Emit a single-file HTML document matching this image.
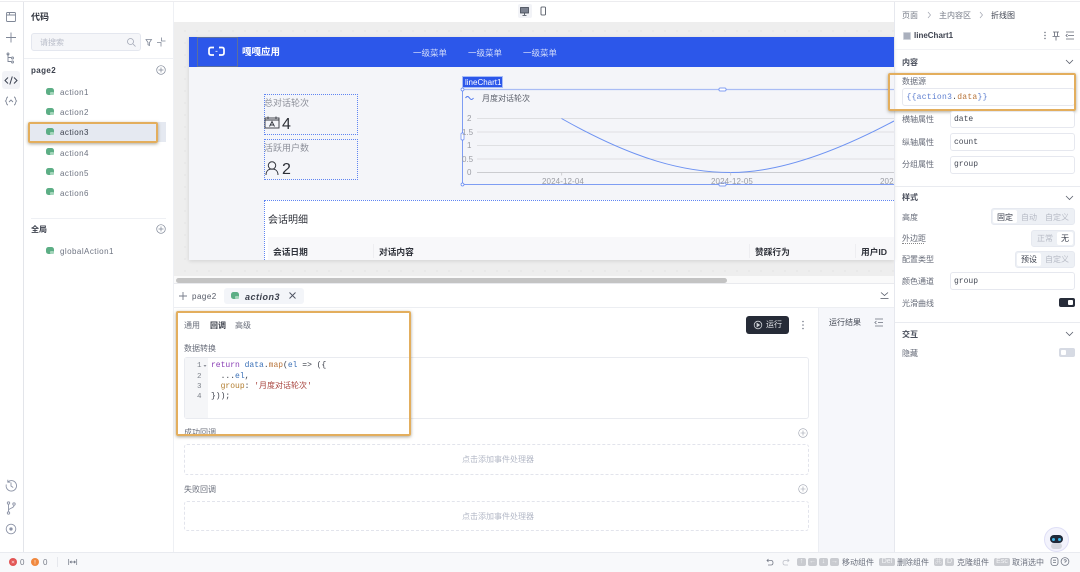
<!DOCTYPE html>
<html lang="zh"><head><meta charset="utf-8"><title>代码</title>
<style>
*{box-sizing:border-box}
html{background:#fff}
html,body{margin:0;padding:0;width:1080px;height:572px;overflow:hidden}
body{position:relative;background:#fff;font-family:"Liberation Sans","Noto Sans CJK SC",sans-serif;font-size:8px;color:#4b5160;filter:blur(.3px)}
.a,.t{position:absolute}
.t{white-space:pre;line-height:12px;height:12px;margin-top:1px}
.m{font-family:"Liberation Mono","Noto Sans CJK SC",monospace}
svg{position:absolute;overflow:visible}
.o{position:absolute;border:2px solid #e3ae5d;border-radius:2px;box-shadow:0 1px 3px rgba(90,80,50,.5)}
.inp{position:absolute;border:1px solid #e6e8ef;border-radius:3px;background:#fff}
.seg{position:absolute;background:#edf0f5;border-radius:3px;border:1px solid #e6e9f0}
.sel{position:absolute;background:#fff;border-radius:2px}
.key{position:absolute;background:#c9cbd0;border-radius:2px;height:8px;top:558px;color:#f4f5f7;font-size:7px;line-height:8px;text-align:center}
.dash{position:absolute;border:1px dashed #e2e4ec;border-radius:3px}
.sl{position:absolute;border:1px dotted #5f85f2}
</style></head><body>

<!-- top line -->
<div class="a" style="left:0;top:1px;width:1080px;height:1px;background:#ececef"></div>

<!-- left rail -->
<div class="a" style="left:23px;top:2px;width:1px;height:550px;background:#e3e5ea"></div>
<div class="a" style="left:2px;top:71px;width:18px;height:18px;background:#f2f3f7;border-radius:3px"></div>
<svg style="left:0;top:0" width="24" height="120" fill="none" stroke="#7f8797" stroke-width=".9">
<rect x="6.500" y="12.500" width="9" height="9" rx="1"/><path d="M6.500 15h9M9.500 12.500v2.500"/>
<path d="M6 37.500h10M11 32.500v10" />
<path d="M8 54v7.500h3M8 57.500h3"/><circle cx="8" cy="54" r="1"/><circle cx="12.500" cy="58" r="1"/><circle cx="12.500" cy="62" r="1"/>
<path d="M8 77.500l-3 3 3 3M14 77.500l3 3-3 3M12.300 76.500l-2.500 8" stroke="#3b4150" stroke-width="1"/>
<path d="M8 97c-2 0-1 3-2.500 4 1.500 1 .5 4 2.500 4M14 97c2 0 1 3 2.500 4-1.500 1-.5 4-2.500 4M9 102l2-2 2 2"/>
</svg>
<svg style="left:0;top:470px" width="24" height="70" fill="none" stroke="#8c93a6" stroke-width=".9">
<path d="M6.300 12.500a5.200 5.200 0 1 0 1.500-2.500M7.800 7.800v2.400h2.400" transform="translate(0 2)"/><path d="M11 12.500v3.500l2.200 1.500"/>
<circle cx="8.500" cy="33" r="1.200"/><circle cx="8.500" cy="43" r="1.200"/><circle cx="14" cy="34" r="1.200"/><path d="M8.500 34.500v7M14 35.500c0 3-5.500 2.500-5.500 5"/>
<circle cx="11" cy="59" r="4.800"/><circle cx="11" cy="59" r="1.200" fill="#8c93a6"/>
</svg>

<!-- code panel -->
<div class="t" style="left:31px;top:10px;font-size:9px;color:#30343e;font-weight:600">代码</div>
<div class="inp" style="left:31px;top:33px;width:110px;height:18px;background:#f5f6f9;border-color:#e4e7ef"></div>
<div class="t" style="left:40px;top:36px;color:#b9bdc9">请搜索</div>
<svg style="left:125px;top:36px" width="50" height="14" fill="none" stroke="#a2a7b5" stroke-width=".8">
<circle cx="5.500" cy="5.500" r="3"/><path d="M8 8l2.500 2.500"/>
<path stroke="#7f8797" d="M21 3.500h5.500l-2 3v3l-1.500-.8v-2.200z"/>
<path stroke="#7f8797" d="M32 6.500h4V10.500M36.500 1.500v3.500h4"/>
</svg>
<div class="a" style="left:24px;top:58px;width:149px;height:1px;background:#eef0f4"></div>
<div class="t" style="left:31px;top:64px;color:#3c414d;letter-spacing:.4px;font-weight:600">page2</div>
<svg style="left:156px;top:65px" width="10" height="10" fill="none" stroke="#7f8797" stroke-width=".7"><circle cx="5" cy="5" r="4.300"/><path d="M2.500 5h5M5 2.500v5"/></svg>

<div class="a" style="left:30px;top:122px;width:136px;height:20px;background:#e5e9f1"></div>

<svg style="left:45px;top:86px" width="12" height="170" fill="#5cae85">
<rect x="1" y="2" width="8" height="7" rx="2.500"/><rect x="5" y="6" width="4" height="3" rx="1" fill="#a4d5bb"/>
<rect x="1" y="22" width="8" height="7" rx="2.500"/><rect x="5" y="26" width="4" height="3" rx="1" fill="#a4d5bb"/>
<rect x="1" y="42" width="8" height="7" rx="2.500"/><rect x="5" y="46" width="4" height="3" rx="1" fill="#a4d5bb"/>
<rect x="1" y="62" width="8" height="7" rx="2.500"/><rect x="5" y="66" width="4" height="3" rx="1" fill="#a4d5bb"/>
<rect x="1" y="82" width="8" height="7" rx="2.500"/><rect x="5" y="86" width="4" height="3" rx="1" fill="#a4d5bb"/>
<rect x="1" y="102" width="8" height="7" rx="2.500"/><rect x="5" y="106" width="4" height="3" rx="1" fill="#a4d5bb"/>
<rect x="1" y="161" width="8" height="7" rx="2.500"/><rect x="5" y="165" width="4" height="3" rx="1" fill="#a4d5bb"/>
</svg>
<div class="t" style="left:60px;top:86px;color:#6e7482;letter-spacing:.45px">action1</div>
<div class="t" style="left:60px;top:106px;color:#6e7482;letter-spacing:.45px">action2</div>
<div class="t" style="left:60px;top:126px;color:#3c414d;letter-spacing:.45px">action3</div>
<div class="t" style="left:60px;top:147px;color:#6e7482;letter-spacing:.45px">action4</div>
<div class="t" style="left:60px;top:167px;color:#6e7482;letter-spacing:.45px">action5</div>
<div class="t" style="left:60px;top:187px;color:#6e7482;letter-spacing:.45px">action6</div>
<div class="o" style="left:28px;top:122px;width:130px;height:21px"></div>
<div class="a" style="left:31px;top:218px;width:135px;height:1px;background:#eef0f4"></div>
<div class="t" style="left:31px;top:223px;color:#3c414d;font-weight:600">全局</div>
<svg style="left:156px;top:224px" width="10" height="10" fill="none" stroke="#7f8797" stroke-width=".7"><circle cx="5" cy="5" r="4.300"/><path d="M2.500 5h5M5 2.500v5"/></svg>
<div class="t" style="left:60px;top:245px;color:#6e7482;letter-spacing:.45px">globalAction1</div>
<div class="a" style="left:173px;top:2px;width:1px;height:550px;background:#eef0f4"></div>

<!-- canvas -->
<div class="a" style="left:174px;top:22px;width:720px;height:254px;background:#eeeeee radial-gradient(circle,#dcdcdc .6px,transparent .8px) 5px 3px/12px 12px"></div>
<div class="a" style="left:518px;top:4px;width:14px;height:14px;background:#f2f3f7;border-radius:2px"></div>
<svg style="left:518px;top:4px" width="34" height="14" fill="none" stroke="#3f4552" stroke-width=".8">
<rect x="2.500" y="3.500" width="8" height="5.500" fill="#7c8290"/><path d="M6.500 9v2M4.500 11.500h4"/>
<rect x="23" y="3" width="4.500" height="8" rx=".8"/>
</svg>
<div class="a" style="left:189px;top:37px;width:705px;height:223px;background:#f4f5f9;box-shadow:0 1px 4px rgba(0,0,0,.12)"></div>
<div class="a" style="left:189px;top:37px;width:705px;height:30px;background:#2c57ea"></div>
<div class="a" style="left:197px;top:37px;width:41px;height:30px;border:1px solid #5a6f9f"></div>
<svg style="left:208px;top:46px" width="18" height="12" fill="none" stroke="#fff" stroke-width="1.700"><path d="M6 1.500H3Q1 1.500 1 3.500v3.500q0 2 2 2h3M11 1.500h3q2 0 2 2v3.500q0 2-2 2h-3"/><path d="M7.500 5.300h2" stroke-width=".8"/></svg>
<div class="t" style="left:242px;top:46px;font-size:9.500px;color:#fff;font-weight:600">嘎嘎应用</div>
<div class="t" style="left:413px;top:46px;font-size:8.500px;color:#d4ddfa">一级菜单</div>
<div class="t" style="left:468px;top:46px;font-size:8.500px;color:#d4ddfa">一级菜单</div>
<div class="t" style="left:523px;top:46px;font-size:8.500px;color:#d4ddfa">一级菜单</div>

<!-- stat cards -->
<div class="sl" style="left:264px;top:94px;width:94px;height:41px"></div>
<div class="t" style="left:264px;top:96px;font-size:9px;color:#8d909a">总对话轮次</div>
<svg style="left:264px;top:116px" width="16" height="14" fill="none" stroke="#33363e" stroke-width=".9"><rect x="1" y="2" width="14" height="10"/><path d="M4 .5v2.500M12 .5v2.500M1 4h14M5.500 10.500l2.500-5 2.500 5M6.500 9h3"/></svg>
<div class="t" style="left:282px;top:116px;font-size:16px;line-height:15px;height:15px;color:#2c2f36">4</div>
<div class="sl" style="left:264px;top:139px;width:94px;height:41px"></div>
<div class="t" style="left:264px;top:141px;font-size:9px;color:#8d909a">活跃用户数</div>
<svg style="left:264px;top:160px" width="16" height="16" fill="none" stroke="#33363e" stroke-width="1"><circle cx="8" cy="5.500" r="3.700"/><path d="M2 15c0-4 2.500-6 6-6s6 2 6 6"/></svg>
<div class="t" style="left:282px;top:161px;font-size:16px;line-height:15px;height:15px;color:#2c2f36">2</div>

<!-- chart -->
<div class="a" style="left:462px;top:76px;width:41px;height:12px;background:#2c57ea;border:1px solid #a8bdf6"></div>
<div class="t" style="left:465px;top:76px;color:#fff">lineChart1</div>
<svg style="left:460px;top:85px" width="434" height="105" fill="none">
<path d="M17 33.500H434M17 47H434M17 60.500H434M17 74H434" stroke="#dfe0e3" stroke-width="1"/>
<path d="M17 87.500H434" stroke="#cbccd0" stroke-width="1"/>
<path d="M101.500 33.500C175 75 225 87.500 271 87.500 325 87.500 385 62 434 36" stroke="#6d92f2" stroke-width="1"/>
<path d="M101.700 87.500v3M270.700 87.500v3" stroke="#c5c6c9" stroke-width=".8"/>
<path d="M2.500 4.500H434" stroke="#a9bcf5" stroke-width="1.200"/>
<path d="M2.500 4.500V99.500H434" stroke="#7e9df3" stroke-width="1"/>
<path d="M5.500 13q2-3 4 0t4 0" stroke="#4f77ee" stroke-width="1"/>
<circle cx="2.500" cy="4.500" r="1.500" fill="#fff" stroke="#5f84f0" stroke-width=".7"/>
<circle cx="2.500" cy="99.500" r="1.500" fill="#fff" stroke="#5f84f0" stroke-width=".7"/>
<rect x="1" y="48" width="3" height="7" rx="1" fill="#fff" stroke="#5f84f0" stroke-width=".7"/>
<rect x="259" y="3" width="7" height="3" rx="1" fill="#fff" stroke="#5f84f0" stroke-width=".7"/>
<rect x="259" y="98" width="7" height="3" rx="1" fill="#fff" stroke="#5f84f0" stroke-width=".7"/>
</svg>
<div class="t" style="left:482px;top:92px;color:#5a5e69">月度对话轮次</div>
<div class="t" style="left:467px;top:112px;color:#9a9ca3">2</div>
<div class="t" style="left:462px;top:126px;color:#9a9ca3">1.5</div>
<div class="t" style="left:467px;top:139px;color:#9a9ca3">1</div>
<div class="t" style="left:462px;top:153px;color:#9a9ca3">0.5</div>
<div class="t" style="left:467px;top:166px;color:#9a9ca3">0</div>
<div class="t" style="left:542px;top:175px;color:#9a9ca3;letter-spacing:.1px">2024-12-04</div>
<div class="t" style="left:711px;top:175px;color:#9a9ca3;letter-spacing:.1px">2024-12-05</div>
<div class="t" style="left:880px;top:175px;width:14px;overflow:hidden;color:#9a9ca3;letter-spacing:.1px">2024</div>

<!-- table -->
<div class="a" style="left:264px;top:200px;width:630px;height:60px;background:#fff;border-top:1px dotted #5f85f2;border-left:1px dotted #5f85f2"></div>
<div class="t" style="left:268px;top:214px;font-size:10px;color:#30333b">会话明细</div>
<div class="a" style="left:268px;top:237px;width:626px;height:23px;background:#f8f8fa"></div>
<div class="a" style="left:373px;top:244px;width:1px;height:14px;background:#eeeef1"></div>
<div class="a" style="left:749px;top:244px;width:1px;height:14px;background:#eeeef1"></div>
<div class="a" style="left:855px;top:244px;width:1px;height:14px;background:#eeeef1"></div>
<div class="t" style="left:273px;top:245px;font-size:8.700px;color:#2f323a;font-weight:600">会话日期</div>
<div class="t" style="left:379px;top:245px;font-size:8.700px;color:#2f323a;font-weight:600">对话内容</div>
<div class="t" style="left:755px;top:245px;font-size:8.700px;color:#2f323a;font-weight:600">赞踩行为</div>
<div class="t" style="left:861px;top:245px;font-size:8.700px;color:#2f323a;font-weight:600">用户ID</div>

<!-- scrollbar -->
<div class="a" style="left:174px;top:276px;width:720px;height:8px;background:#fafafa;border-bottom:1px solid #e9eaee"></div>
<div class="a" style="left:176px;top:278px;width:551px;height:5px;background:#c3c3c3;border-radius:3px"></div>

<!-- bottom tabs -->
<svg style="left:178px;top:291px" width="10" height="10" stroke="#777d8b" stroke-width=".9"><path d="M1 5h8M5 1v8"/></svg>
<div class="t" style="left:192px;top:290px;color:#555a67;letter-spacing:.5px">page2</div>
<div class="a" style="left:224px;top:288px;width:80px;height:16px;background:#f3f5f9;border-radius:3px"></div>
<svg style="left:231px;top:291px" width="10" height="10"><rect x="0" y="1" width="8" height="7" rx="2.500" fill="#5cae85"/><rect x="4" y="5" width="4" height="3" rx="1" fill="#a4d5bb"/></svg>
<div class="t" style="left:245px;top:290px;font-size:9px;color:#3c414d;font-weight:700;font-style:italic;letter-spacing:.5px">action3</div>
<svg style="left:288px;top:291px" width="10" height="10" stroke="#4c5160" stroke-width=".9"><path d="M1.500 1.500l6 6M7.500 1.500l-6 6"/></svg>
<div class="a" style="left:174px;top:307px;width:720px;height:1px;background:#eceef2"></div>
<div class="a" style="left:874px;top:284px;width:20px;height:23px;background:#fff"></div>
<svg style="left:880px;top:291px" width="10" height="10" fill="none" stroke="#4f5462" stroke-width=".8"><path d="M1 1.500l3.500 3 3.500-3M.5 7.500h8"/></svg>

<!-- editor pane -->
<div class="t" style="left:184px;top:319px;color:#686d7a">通用</div>
<div class="t" style="left:210px;top:319px;color:#3a3e49;font-weight:600">回调</div>
<div class="t" style="left:235px;top:319px;color:#686d7a">高级</div>
<div class="a" style="left:746px;top:316px;width:43px;height:18px;background:#262b37;border-radius:3px"></div>
<svg style="left:753px;top:320px" width="10" height="10" fill="none" stroke="#cfd2d8" stroke-width=".8"><circle cx="5" cy="5" r="3.800"/><path d="M4 3.300l2.500 1.700L4 6.700z" fill="#cfd2d8"/></svg>
<div class="t" style="left:766px;top:318px;color:#dfe1e6">运行</div>
<svg style="left:801px;top:320px" width="4" height="10" fill="#777c89"><circle cx="2" cy="1.500" r=".8"/><circle cx="2" cy="5" r=".8"/><circle cx="2" cy="8.500" r=".8"/></svg>
<div class="t" style="left:184px;top:342px;color:#686d7a">数据转换</div>
<div class="a" style="left:184px;top:357px;width:625px;height:62px;background:#fff;border:1px solid #e9ebf0;border-radius:3px"></div>
<div class="a" style="left:185px;top:358px;width:23px;height:60px;background:#f5f6f8"></div>
<div class="t m" style="left:197px;top:359px;font-size:7.500px;color:#7b8089">1</div>
<div class="t m" style="left:197px;top:370px;font-size:7.500px;color:#7b8089">2</div>
<div class="t m" style="left:197px;top:380px;font-size:7.500px;color:#7b8089">3</div>
<div class="t m" style="left:197px;top:390px;font-size:7.500px;color:#7b8089">4</div>
<svg style="left:203px;top:364px" width="5" height="5" fill="#8b8f98"><path d="M.5 1h3L2 3z"/></svg>
<div class="t m" style="left:211px;top:359px;font-size:8px;color:#3a3e49"><span style="color:#8a3fb5">return</span> <span style="color:#3d72b8">data</span>.<span style="color:#b9763c">map</span>(<span style="color:#3d72b8">el</span> =&gt; ({</div>
<div class="t m" style="left:211px;top:370px;font-size:8px;color:#3a3e49">  ...<span style="color:#3d72b8">el</span>,</div>
<div class="t m" style="left:211px;top:380px;font-size:8px;color:#3a3e49">  <span style="color:#b27c2e">group</span>: <span style="color:#a8443e">'月度对话轮次'</span></div>
<div class="t m" style="left:211px;top:390px;font-size:8px;color:#3a3e49">}));</div>

<div class="t" style="left:184px;top:426px;color:#686d7a">成功回调</div>
<svg style="left:798px;top:428px" width="10" height="10" fill="none" stroke="#9a9fac" stroke-width=".6"><circle cx="5" cy="5" r="4.300"/><path d="M2.500 5h5M5 2.500v5"/></svg>
<div class="dash" style="left:184px;top:444px;width:625px;height:31px"></div>
<div class="t" style="left:462px;top:453px;color:#b4b9c7">点击添加事件处理器</div>
<div class="t" style="left:184px;top:483px;color:#686d7a">失败回调</div>
<svg style="left:798px;top:484px" width="10" height="10" fill="none" stroke="#9a9fac" stroke-width=".6"><circle cx="5" cy="5" r="4.300"/><path d="M2.500 5h5M5 2.500v5"/></svg>
<div class="dash" style="left:184px;top:501px;width:625px;height:30px"></div>
<div class="t" style="left:462px;top:510px;color:#b4b9c7">点击添加事件处理器</div>
<div class="o" style="left:176px;top:311px;width:235px;height:125px"></div>

<!-- run results -->
<div class="a" style="left:818px;top:308px;width:76px;height:244px;background:#f6f7fb;border-left:1px solid #eceef3"></div>
<div class="t" style="left:829px;top:316px;color:#444955">运行结果</div>
<svg style="left:874px;top:318px" width="10" height="9" fill="none" stroke="#6a6f7c" stroke-width=".7"><path d="M1 1h8M4 4.500h5M1 8h8M2.500 3L.8 4.500l1.700 1.500"/></svg>

<!-- right panel -->
<div class="a" style="left:894px;top:2px;width:1px;height:550px;background:#e6e8ee"></div>
<div class="t" style="left:902px;top:9px;color:#777c88">页面</div>
<svg style="left:926px;top:11px" width="70" height="8" fill="none" stroke="#a3a7b2" stroke-width=".7"><path d="M2 1l2.500 3L2 7M54 1l2.500 3L54 7"/></svg>
<div class="t" style="left:939px;top:9px;color:#777c88">主内容区</div>
<div class="t" style="left:991px;top:9px;color:#3e4350">折线图</div>
<div class="a" style="left:903px;top:32px;width:8px;height:8px;background:#aab0bd;border-radius:1px;border:1.500px solid #cfd3db"></div>
<div class="t" style="left:914px;top:29px;color:#3e4350;font-weight:600">lineChart1</div>
<svg style="left:1040px;top:30px" width="36" height="12" fill="none" stroke="#626774" stroke-width=".8">
<g fill="#626774" stroke="none"><circle cx="5" cy="2.500" r=".7"/><circle cx="5" cy="5.500" r=".7"/><circle cx="5" cy="8.500" r=".7"/></g>
<path d="M13 2h6M14.500 2v4M17.500 2v4M12.500 6.500h7M16 6.500v4"/>
<path d="M26 2h8M28 5.500h6M26 9h8M27.500 4l-1.500 1.500 1.500 1.500"/>
</svg>
<div class="a" style="left:895px;top:49px;width:185px;height:1px;background:#f1f2f5"></div>
<div class="t" style="left:902px;top:56px;color:#4a4f5c;font-weight:600">内容</div>
<svg style="left:1065px;top:59px" width="10" height="6" fill="none" stroke="#5c616e" stroke-width=".8"><path d="M1 1l3.500 3.500L8 1"/></svg>
<div class="t" style="left:902px;top:75px;color:#666b78">数据源</div>
<div class="inp" style="left:902px;top:88px;width:173px;height:18px"></div>
<div class="t m" style="left:906.500px;top:91px;font-size:8px;letter-spacing:.27px;color:#5e7fd0">{{action3<span style="color:#444">.</span><span style="color:#b9763c">data</span>}}</div>
<div class="o" style="left:888px;top:73px;width:188px;height:38px"></div>

<div class="t" style="left:902px;top:113px;color:#666b78">横轴属性</div>
<div class="inp" style="left:950px;top:111px;width:125px;height:17px"></div>
<div class="t m" style="left:954px;top:113px;font-size:8px;color:#444955">date</div>
<div class="t" style="left:902px;top:136px;color:#666b78">纵轴属性</div>
<div class="inp" style="left:950px;top:133px;width:125px;height:18px"></div>
<div class="t m" style="left:954px;top:136px;font-size:8px;color:#444955">count</div>
<div class="t" style="left:902px;top:158px;color:#666b78">分组属性</div>
<div class="inp" style="left:950px;top:156px;width:125px;height:18px"></div>
<div class="t m" style="left:954px;top:158px;font-size:8px;color:#444955">group</div>

<div class="a" style="left:895px;top:186px;width:185px;height:1px;background:#e9ebf0"></div>
<div class="t" style="left:902px;top:191px;color:#4a4f5c;font-weight:600">样式</div>
<svg style="left:1065px;top:195px" width="10" height="6" fill="none" stroke="#5c616e" stroke-width=".8"><path d="M1 1l3.500 3.500L8 1"/></svg>
<div class="t" style="left:902px;top:211px;color:#666b78">高度</div>
<div class="seg" style="left:991px;top:208px;width:84px;height:17px"></div>
<div class="sel" style="left:993px;top:210px;width:24px;height:13px"></div>
<div class="t" style="left:997px;top:211px;color:#3e4350">固定</div>
<div class="t" style="left:1021px;top:211px;color:#b6bac5">自动</div>
<div class="t" style="left:1045px;top:211px;color:#b6bac5">自定义</div>
<div class="t" style="left:902px;top:232px;color:#666b78">外边距</div>
<div class="a" style="left:902px;top:243px;width:22px;border-top:1px dotted #888"></div>
<div class="seg" style="left:1031px;top:230px;width:44px;height:17px"></div>
<div class="sel" style="left:1057px;top:232px;width:16px;height:13px"></div>
<div class="t" style="left:1037px;top:232px;color:#b6bac5">正常</div>
<div class="t" style="left:1061px;top:232px;color:#3e4350">无</div>
<div class="t" style="left:902px;top:253px;color:#666b78">配置类型</div>
<div class="seg" style="left:1015px;top:251px;width:60px;height:17px"></div>
<div class="sel" style="left:1017px;top:253px;width:24px;height:13px"></div>
<div class="t" style="left:1021px;top:253px;color:#3e4350">预设</div>
<div class="t" style="left:1045px;top:253px;color:#b6bac5">自定义</div>
<div class="t" style="left:902px;top:275px;color:#666b78">颜色通道</div>
<div class="inp" style="left:950px;top:272px;width:125px;height:18px"></div>
<div class="t m" style="left:954px;top:275px;font-size:8px;color:#444955">group</div>
<div class="t" style="left:902px;top:297px;color:#666b78">光滑曲线</div>
<div class="a" style="left:1059px;top:298px;width:16px;height:9px;background:#272c39;border-radius:2px"></div>
<div class="a" style="left:1068px;top:300px;width:5px;height:5px;background:#fff;border-radius:1px"></div>
<div class="a" style="left:895px;top:322px;width:185px;height:1px;background:#e9ebf0"></div>
<div class="t" style="left:902px;top:328px;color:#4a4f5c;font-weight:600">交互</div>
<svg style="left:1065px;top:331px" width="10" height="6" fill="none" stroke="#5c616e" stroke-width=".8"><path d="M1 1l3.500 3.500L8 1"/></svg>
<div class="t" style="left:902px;top:347px;color:#666b78">隐藏</div>
<div class="a" style="left:1059px;top:348px;width:16px;height:9px;background:#d6dae3;border-radius:2px"></div>
<div class="a" style="left:1061px;top:350px;width:5px;height:5px;background:#fff;border-radius:1px"></div>

<!-- robot -->
<div class="a" style="left:1044px;top:527px;width:25px;height:25px;border-radius:50%;background:#f3f3fc;border:1.500px solid #dfdff6"></div>
<div class="a" style="left:1050px;top:535px;width:13px;height:8px;border-radius:4px;background:#1f2a3a"></div>
<div class="a" style="left:1052px;top:537.500px;width:3px;height:3px;border-radius:50%;background:#3fb6e8"></div>
<div class="a" style="left:1058px;top:537.500px;width:3px;height:3px;border-radius:50%;background:#3fb6e8"></div>
<div class="a" style="left:1051px;top:543px;width:11px;height:6px;border-radius:3px;background:#d5d7de"></div>

<!-- status bar -->
<div class="a" style="left:0;top:552px;width:1080px;height:20px;background:#f8f9fb;border-top:1px solid #e9ebf0"></div>
<div class="a" style="left:9px;top:558px;width:8px;height:8px;border-radius:50%;background:#e25555"></div>
<svg style="left:9px;top:558px" width="8" height="8" stroke="#f7c9c9" stroke-width=".7"><path d="M2.700 2.700l2.600 2.600M5.300 2.700L2.700 5.300"/></svg>
<div class="t" style="left:20px;top:556px;color:#777c88">0</div>
<div class="a" style="left:31px;top:558px;width:8px;height:8px;border-radius:50%;background:#f0883e"></div>
<svg style="left:31px;top:558px" width="8" height="8" stroke="#fde3cf" stroke-width=".8"><path d="M4 2v2.800M4 5.400v.8"/></svg>
<div class="t" style="left:43px;top:556px;color:#777c88">0</div>
<div class="a" style="left:57px;top:557px;width:1px;height:10px;background:#e6e8ed"></div>
<svg style="left:68px;top:558px" width="10" height="8" fill="none" stroke="#6f7583" stroke-width=".7"><path d="M.7 1v6M8.700 1v6M2 4h5.500M3.500 2.800L2 4l1.500 1.200M6 2.800L7.500 4 6 5.200"/></svg>
<svg style="left:766px;top:558px" width="24" height="9" fill="none" stroke-width=".8"><path stroke="#777c89" d="M2.500 1L1 2.500 2.500 4M1 2.500h4q2 0 2 2.200T5 7H2"/><path stroke="#bfc2ca" d="M21.500 1L23 2.500 21.500 4M23 2.500h-4q-2 0-2 2.200T19 7h3"/></svg>
<div class="key" style="left:797px;width:9px">↑</div>
<div class="key" style="left:808px;width:9px">←</div>
<div class="key" style="left:819px;width:9px">↓</div>
<div class="key" style="left:830px;width:9px">→</div>
<div class="t" style="left:842px;top:556px;color:#6b707d">移动组件</div>
<div class="key" style="left:879px;width:16px">Del</div>
<div class="t" style="left:897px;top:556px;color:#6b707d">删除组件</div>
<div class="key" style="left:934px;width:9px">⌘</div>
<div class="key" style="left:945px;width:9px">D</div>
<div class="t" style="left:957px;top:556px;color:#6b707d">克隆组件</div>
<div class="key" style="left:994px;width:16px">Esc</div>
<div class="t" style="left:1012px;top:556px;color:#6b707d">取消选中</div>
<svg style="left:1050px;top:557px" width="26" height="10" fill="none" stroke="#6f7583" stroke-width=".8"><rect x="1" y=".5" width="7" height="8" rx="2.500"/><path d="M3 3.200h3M3 5.500h3"/><circle cx="15" cy="4.500" r="3.900"/><path d="M13.800 3.300q1.300-1.200 2.400 0 .5 1-1.200 1.700v.8"/></svg>

</body></html>
